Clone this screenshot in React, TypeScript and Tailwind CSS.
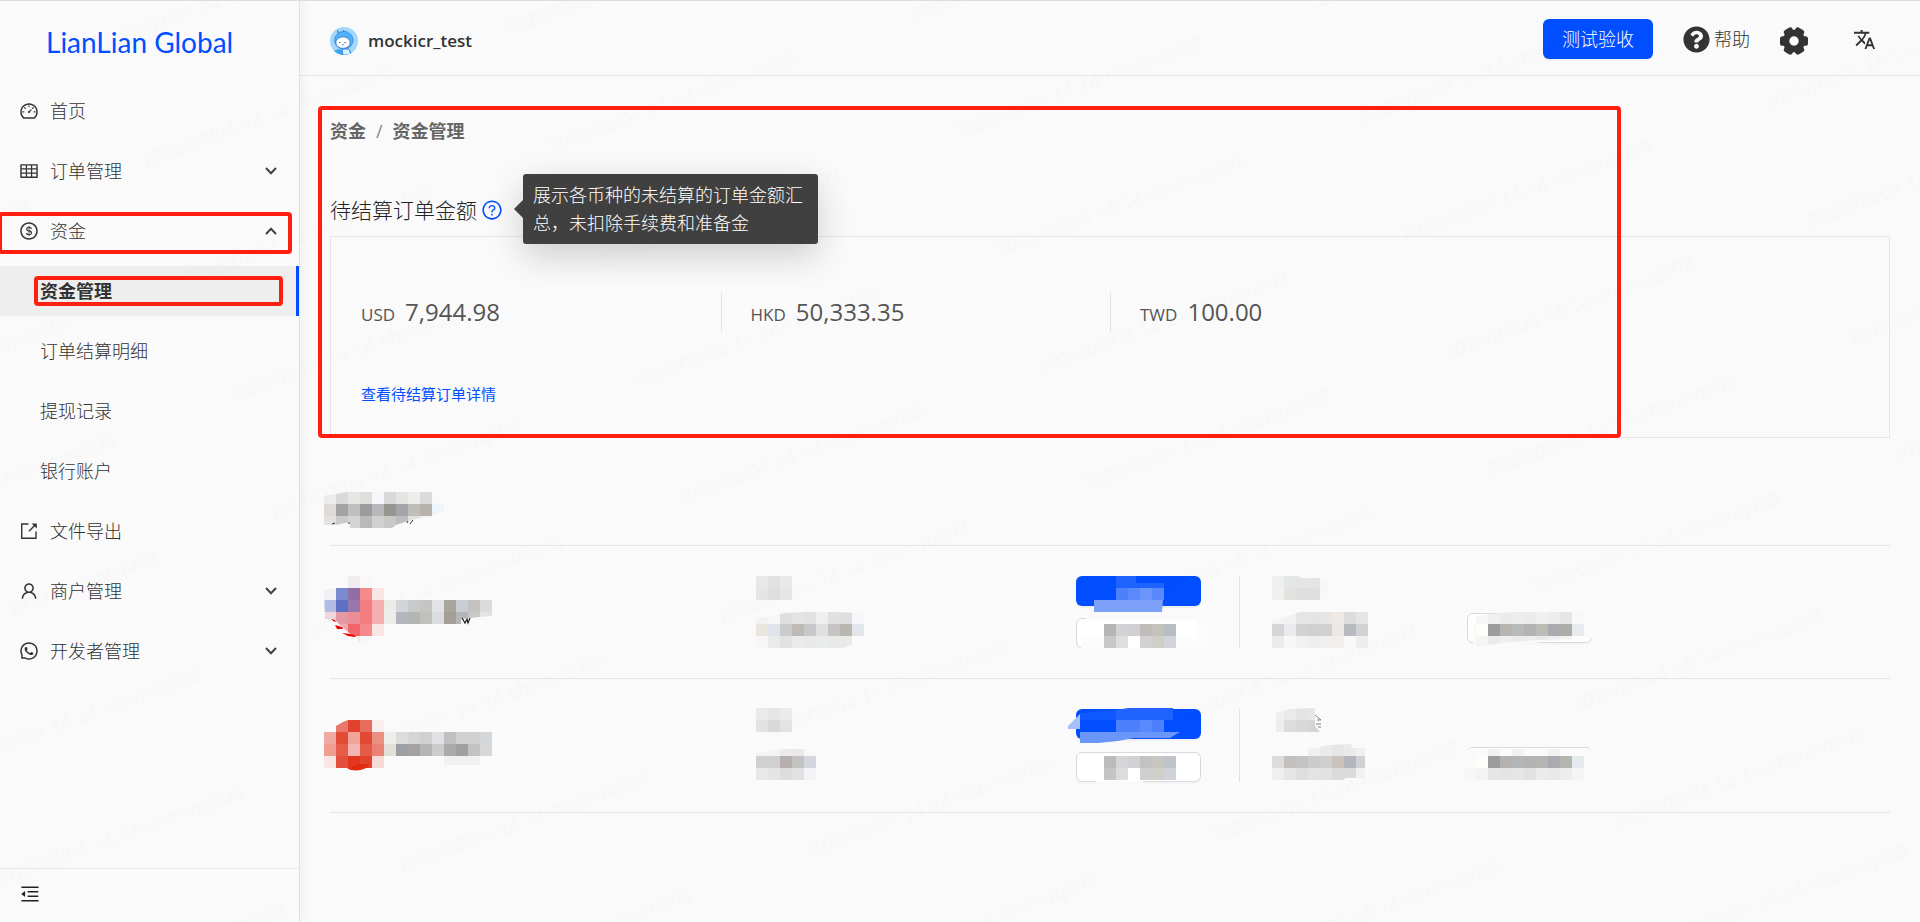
import type { ReactNode } from "react";
import {
  AiOutlineDashboard,
  AiOutlineDollarCircle,
  AiOutlineMenuFold,
  AiOutlineQuestionCircle,
  AiOutlineTable,
  AiOutlineUser,
  AiOutlineWhatsApp,
} from "react-icons/ai";
import { FaQuestionCircle } from "react-icons/fa";
import { MdTranslate } from "react-icons/md";

const CELL = 12;

/* ---------- Redaction mosaics ---------- */

type Piece = { x: number; y: number; rows: string[]; clip?: string };

function Pixels({ x, y, rows, clip }: Piece) {
  const id = `clip-${x}-${y}`;
  return (
    <g clipPath={clip ? `url(#${id})` : undefined} shapeRendering="crispEdges">
      {clip && (
        <clipPath id={id}>
          <polygon points={clip} />
        </clipPath>
      )}
      {rows.map((row, r) =>
        row.split(" ").map((color, c) =>
          color === "." ? null : (
            <rect key={`${r}-${c}`} x={x + c * CELL} y={y + r * CELL} width={CELL} height={CELL} fill={`#${color}`} />
          ),
        ),
      )}
    </g>
  );
}

function Mosaic({
  x,
  y,
  w,
  h,
  className = "block",
  pieces = [],
  children,
}: {
  x: number;
  y: number;
  w: number;
  h: number;
  className?: string;
  pieces?: Piece[];
  children?: ReactNode;
}) {
  return (
    <svg
      aria-hidden="true"
      width={w}
      height={h}
      viewBox={`${x} ${y} ${w} ${h}`}
      className={`pointer-events-none overflow-visible ${className}`}
    >
      {pieces.map((p) => (
        <Pixels key={`${p.x}-${p.y}`} {...p} />
      ))}
      {children}
    </svg>
  );
}

/* ---------- Icons ---------- */

function Chevron({ up = false }: { up?: boolean }) {
  return (
    <svg width="12" height="8" viewBox="0 0 12 8" fill="none" stroke="#444" strokeWidth="2" aria-hidden="true">
      <path d={up ? "M1 7 6 1.8 11 7" : "M1 1 6 6.2 11 1"} />
    </svg>
  );
}

function ExportIcon() {
  return (
    <svg width="20" height="20" viewBox="-1 -1 20 20" fill="none" stroke="currentColor" strokeWidth="1.4" aria-hidden="true">
      <path d="M8.5 2H1.7v14.3H16V9.5" />
      <path d="M9 9.2 15.2 3" />
      <path d="M11.6 1.4h5.2v5.2z" fill="currentColor" stroke="none" />
    </svg>
  );
}

function GearIcon() {
  return (
    <svg width="28" height="28" viewBox="-14 -14 28 28" fill="currentColor" aria-hidden="true">
      <circle r="11.3" />
      {[0, 60, 120].map((angle) => (
        <rect key={angle} x="-14" y="-4.8" width="28" height="9.6" rx="2.6" transform={`rotate(${angle})`} />
      ))}
      <circle r="4.7" fill="#fafafa" />
    </svg>
  );
}

function Avatar() {
  return (
    <svg width="28" height="28" viewBox="0 0 28 28" aria-hidden="true">
      <clipPath id="avatar-round">
        <circle cx="14" cy="14" r="14" />
      </clipPath>
      <g clipPath="url(#avatar-round)">
        <rect width="28" height="28" fill="#a3d6fb" />
        <path d="M4 24c3-2 6-2 8-1l7 0c2 1 3 3 3 5H7z" fill="#3ba4f5" />
        <path d="M12 22h7l2 6h-8z" fill="#d9efff" stroke="#2f7fd6" strokeWidth=".8" />
        <path d="M8.5 6 7.4 3.4M13.5 5.5l.2-2.2" stroke="#2f6fc4" strokeWidth="1.1" />
        <ellipse cx="13.8" cy="13.2" rx="9.2" ry="8.8" fill="#4fb3fb" stroke="#2f86e0" strokeWidth=".8" />
        <ellipse cx="13" cy="15.6" rx="7.2" ry="5.8" fill="#fff" stroke="#2f6fc4" strokeWidth=".8" />
        <path d="M9 15.5h1.4M14.4 15.5h1.4M12 17.4l.8.5.8-.5" stroke="#3b5fa8" strokeWidth="1" fill="none" />
      </g>
    </svg>
  );
}

/* ---------- Sidebar ---------- */

function NavItem({ icon, label, arrow, boxed }: { icon: ReactNode; label: string; arrow?: "up" | "down"; boxed?: boolean }) {
  return (
    <li className="relative my-[10px]">
      <a href="#" className="flex h-[50px] items-center pr-[22px] pl-[19px] text-[#333]">
        <span className="flex w-[31px] shrink-0 text-xl">{icon}</span>
        <span className="grow">{label}</span>
        {arrow && <Chevron up={arrow === "up"} />}
      </a>
      {boxed && (
        <span className="absolute top-[6px] right-[7px] bottom-[2px] -left-[2px] rounded-[4px] border-4 border-[#ff1f10]" />
      )}
    </li>
  );
}

function SubItem({ label, active }: { label: string; active?: boolean }) {
  return (
    <li className={`relative my-[10px] ${active ? "border-r-[3px] border-[#004eff] bg-[#eee] font-bold" : ""}`}>
      <a href="#" className="flex h-[50px] items-center pl-10 text-[#333]">
        {label}
      </a>
      {active && (
        <span className="absolute top-[10px] right-[13px] bottom-[10px] left-[34px] rounded-[4px] border-4 border-[#ff1f10]" />
      )}
    </li>
  );
}

function Sidebar() {
  return (
    <aside className="z-10 flex w-[300px] shrink-0 flex-col border-r border-[#e2e2e2] font-light shadow-[2px_0_10px_rgba(0,0,0,0.05)]">
      <div className="flex h-[75px] items-center pt-[6px] pl-[46px] font-[Lato] text-[28px] leading-none font-normal whitespace-nowrap text-[#004eff]">
        LianLian Global
      </div>
      <nav className="grow">
        <ul className="flow-root">
          <NavItem icon={<AiOutlineDashboard />} label="首页" />
          <NavItem icon={<AiOutlineTable />} label="订单管理" arrow="down" />
          <NavItem icon={<AiOutlineDollarCircle />} label="资金" arrow="up" boxed />
          <SubItem label="资金管理" active />
          <SubItem label="订单结算明细" />
          <SubItem label="提现记录" />
          <SubItem label="银行账户" />
          <NavItem icon={<ExportIcon />} label="文件导出" />
          <NavItem icon={<AiOutlineUser />} label="商户管理" arrow="down" />
          <NavItem icon={<AiOutlineWhatsApp />} label="开发者管理" arrow="down" />
        </ul>
      </nav>
      <div className="flex h-[54px] items-center border-t border-[#e8e8e8] px-[19px] pb-1">
        <button type="button" aria-label="收起菜单" className="text-[22px] text-[#222]">
          <AiOutlineMenuFold />
        </button>
      </div>
    </aside>
  );
}

/* ---------- Header ---------- */

function Header() {
  return (
    <header className="flex h-[75px] items-center border-b border-[#e6e6e6] pt-[6px] pr-[44px] pl-[30px] text-[#333]">
      <Avatar />
      <span className="ml-[10px] grow text-[17px] font-semibold">mockicr_test</span>
      <button
        type="button"
        className="mb-1 h-10 rounded-md bg-[#004eff] px-[19px] font-light text-white shadow-[0_2px_0_rgba(0,0,0,0.04)]"
      >
        测试验收
      </button>
      <a href="#" className="mb-1 ml-[30px] flex items-center gap-1 font-light">
        <FaQuestionCircle className="text-[27px]" />
        帮助
      </a>
      <button type="button" aria-label="设置" className="ml-[30px]">
        <GearIcon />
      </button>
      <button type="button" aria-label="语言" className="mb-1 ml-[45px] text-[23px]">
        <MdTranslate />
      </button>
    </header>
  );
}

/* ---------- Pending settlement ---------- */

const balances = [
  { currency: "USD", amount: "7,944.98" },
  { currency: "HKD", amount: "50,333.35" },
  { currency: "TWD", amount: "100.00" },
];

function PendingCard() {
  return (
    <section>
      <div className="relative flex h-[50px] items-center gap-1 pb-[2px]">
        <h1 className="text-[21px] font-light text-[#222]">待结算订单金额</h1>
        <div className="relative flex items-center">
          <AiOutlineQuestionCircle className="text-[22px] text-[#004eff]" />
          <div
            role="tooltip"
            className="absolute -top-[25px] left-full z-20 ml-5 w-[295px] rounded-[3px] bg-[#404040] px-[10px] py-[7px] leading-7 font-light text-white shadow-[0_12px_36px_rgba(0,0,0,0.18)]"
          >
            <svg className="absolute top-[26px] -left-[9px]" width="9" height="18" viewBox="0 0 9 18" aria-hidden="true">
              <path d="M9 0v18L0 9z" fill="#404040" />
            </svg>
            展示各币种的未结算的订单金额汇总，未扣除手续费和准备金
          </div>
        </div>
      </div>
      <div className="border border-[#e6e6e6] pt-[55px] pb-[30px]">
        <dl className="grid grid-cols-4">
          {balances.map((b, i) => (
            <div
              key={b.currency}
              className={`flex h-10 items-center gap-[10px] text-[#555] ${i > 0 ? "border-l border-[#e2e2e2] pl-[29px]" : "pl-[30px]"}`}
            >
              <dt className="pt-[5px] text-[17px]">{b.currency}</dt>
              <dd className="text-2xl font-medium">{b.amount}</dd>
            </div>
          ))}
        </dl>
        <a href="#" className="mt-[49px] ml-[30px] inline-block text-[15px] leading-[26px] text-[#004eff]">
          查看待结算订单详情
        </a>
      </div>
    </section>
  );
}

/* ---------- Accounts ---------- */

const rowClass = "grid grid-cols-[426fr_320fr_163fr_228fr_423fr] border-b border-[#e6e6e6] pt-[30px]";
const primaryClass = "h-[30px] w-[125px] rounded-md bg-[#004eff] shadow-[0_2px_0_rgba(0,0,0,0.04)]";
const plainClass = "h-[30px] w-[125px] rounded-md border border-[#d9d9d9] bg-white shadow-[0_2px_0_rgba(0,0,0,0.02)]";

function FirstAccount() {
  return (
    <li className={`${rowClass} h-[133px]`}>
      <Mosaic
        x={330}
        y={576}
        w={162}
        h={72}
        pieces={[
          {
            x: 324,
            y: 576,
            rows: [
              ". . f0ecf0 f9f8f9",
              "eff1f7 7b8bd0 926ea5 f58a8b fae5e5",
              "b3bce2 5d70c3 9878ac f47f80 f7b0b1",
              "f0d5da e39aa6 ec8e96 f47f80 f7b0b1",
              ". f2a9b0 f26569 f58a8c fae5e5",
              ". . f7e8e8 f9f8f8 .",
            ],
            clip: "324,590 336,588 348,588 348,576 372,576 372,588 384,588 384,636 372,636 372,643 359,643 357,638 348,632 340,625 334,619 325,619",
          },
          {
            x: 384,
            y: 600,
            rows: [
              "eeece8 d4d5d9 c8c9ca c7c5c3 e2e3e5 a8a59c c8ced3 c5c3c2 dadbda",
              "eeece8 b3b6bd b5b5b5 c1c0bc dcdddf a49e96 b3b6b9 c8c8c8 e4e4e4",
            ],
            clip: "384,600 492,600 492,616 480,617 470,618 461,619 461,624 384,624",
          },
        ]}
      >
        <path d="M331 619l4 1 1 2-3-1zM335 625l7 2 1 2-6 0zM342 633l9 1 5 2-1 1-7-1z" fill="#ee0000" />
        <path d="M462 618l3 5 2-4 1 4 2-5" fill="none" stroke="#111" strokeWidth="1.1" />
      </Mosaic>
      <Mosaic
        x={756}
        y={576}
        w={108}
        h={72}
        pieces={[
          { x: 756, y: 576, rows: ["e8e8e8 e2e2e2 e9e9e9", "e5e5e5 dfdfdf e7e7e7"] },
          {
            x: 756,
            y: 612,
            rows: [
              "f3f3f3 f4f6f8 dedede e6e4e2 e1e2e3 efeff1 e0e0e1 dfdedc f4f6f9",
              "ebe5e0 dee4e9 cbcbcb bfbab6 c8c8ca dfe0e2 c4c4c4 bab6b2 e1e6ea",
              "f7f6f4 e9ebea e2e2e2 ebebeb e9e9e7 eaebeb e8eae9 ebeae8",
            ],
            clip: "756,618 766,617 785,613 805,612 832,612 864,613 864,636 852,644 844,648 756,648",
          },
        ]}
      />
      <div className="relative flex flex-col items-start gap-3">
        <button type="button" aria-label="提现" className={primaryClass} />
        <button type="button" aria-label="明细" className={plainClass} />
        <Mosaic x={1076} y={576} w={125} h={72} className="absolute top-0 left-0">
          <path d="M1086 617h116v31.500h-6V620h-110z" fill="#fafafa" />
          <path d="M1196 624h12v24h-12z" fill="#fcfcfc" />
          <path d="M1081 638h115v12h-115z" fill="#fcfcfc" />
          <path d="M1116 576h20v7h28v5h-48z" fill="#1f63ff" />
          <Pixels x={1116} y={588} rows={["4c80fd 5a8afd 6b96fc 5a88fd"]} />
          <path d="M1094 600h69l-1 12h-68z" fill="#7da0f9" />
          <Pixels
            x={1104}
            y={624}
            rows={["b5b5b5 d3d3d3 cfd0d3 bfbcb9 c5c2bb b9bdc5", "c8c8c8 dedede ffffff d3d2d0 cfcec9 d3d4d9"]}
          />
        </Mosaic>
      </div>
      <div className="h-[72px] border-l border-[#e2e2e2] pl-8">
        <Mosaic
          x={1272}
          y={576}
          w={96}
          h={72}
          pieces={[
            {
              x: 1272,
              y: 576,
              rows: ["f0efee e4e7e7 e4e5e4 e4e4e4 f7f7f7", "f1f0ef e2e2e0 dddedf dfdfdf f8f8f8"],
              clip: "1272,576 1298,576 1302,578 1329,578 1326,600 1272,600",
            },
            {
              x: 1272,
              y: 612,
              rows: [
                "f4f4f4 f2f1f0 e5e5e5 e4e4e5 e6e6e6 efe9e6 dcdcdc e5e5e5",
                "d6d5d3 e9ebee d3d2d1 d0d0d0 d1d0d0 ece7e4 b9babf d1d2d2",
                "ebebea f5f7f9 f1f1f1 eeeeee efefef f3edeb f9f9f9 ededec",
              ],
              clip: "1272,621 1285,617 1300,612 1368,612 1368,648 1272,648",
            },
          ]}
        />
      </div>
      <div className="relative pt-[37px]">
        <button type="button" aria-label="查看" className={plainClass} />
        <Mosaic x={1467} y={576} w={125} h={72} className="absolute top-0 left-0">
          <path d="M1504 612h90v26h-3l-80 7-32 1-6-1v-19l8-9 23-2z" fill="#fafafa" />
          <Pixels
            x={1476}
            y={612}
            rows={[
              "f6f6f6 f0f0f0 ebebea ededed ebebeb f0f0f0 ededed e4e6e8 f8f8f8",
              "fffdfa 9c9c9c b8b5b1 b7b9bb b3b3b3 bdbbb6 a9abb0 aeaca8 e7ebef",
              "f6f5f4 ebebeb eeeeee ebebeb eeeeee e9e9e9 eeeeee f3f3f3 ffffff",
            ]}
            clip="1471,618 1490,614 1513,612 1584,612 1584,637 1572,639 1540,640 1510,642 1488,645 1476,646"
          />
        </Mosaic>
      </div>
    </li>
  );
}

function SecondAccount() {
  return (
    <li className={`${rowClass} h-[134px]`}>
      <Mosaic
        x={330}
        y={709}
        w={162}
        h={72}
        pieces={[
          {
            x: 324,
            y: 720,
            rows: [
              ". e9786a e0422d e76c5c faeeec",
              "f0aaa2 e24a34 f0a49a e24a34 ed8f83",
              "ef9c92 e65b4a f4b6b0 e65b48 ec8173",
              "f9e5e3 e24f3d e23620 e2432d f6d8d5",
            ],
            clip: "324,732 336,726 343,722 348,720 384,720 384,768 324,768",
          },
          {
            x: 384,
            y: 732,
            rows: [
              "eeeeea dbdddf d5d5d3 cfd1d0 e0e2e4 c0c0c2 d1d1d1 d2d1d0 d3d7da",
              "e3dfd9 9ca0a4 a4a3a1 b4b5b6 cbccce aaaaaa a0a0a0 c3c3c3 d6d7d9",
            ],
          },
        ]}
      >
        <path d="M347 768q6-1 10-4l13 0q-4 6-14 6.500-6 0-9-2.500z" fill="#e02b13" />
        <path d="M444 756h36v9h-36z" fill="#f1f1f1" />
      </Mosaic>
      <Mosaic
        x={756}
        y={709}
        w={108}
        h={72}
        pieces={[
          { x: 756, y: 708, rows: ["e9eae9 e6e6e6 eaecec", "e3e3e1 dadada e3e5e4"] },
          {
            x: 756,
            y: 744,
            rows: [
              "f3f3f3 f3f3f3 ebebeb e9e9ea f7f7f7",
              "d0d0d0 d0d0d0 b6afad c3c3c4 d4d6de",
              "e8e8e6 e3e4e5 dddddd e1e1df f3f4f8",
            ],
            clip: "756,753 767,752 786,749 804,749 816,754 816,780 756,780",
          },
        ]}
      />
      <div className="relative flex flex-col items-start gap-[13px]">
        <button type="button" aria-label="提现" className={primaryClass} />
        <button type="button" aria-label="明细" className={plainClass} />
        <Mosaic x={1076} y={709} w={125} h={72} className="absolute top-0 left-0">
          <path d="M1080 713l36-3v10h-36z" fill="#1058ff" />
          <path d="M1116 710l12-2h45v12h-57z" fill="#2063ff" />
          <Pixels x={1116} y={720} rows={["4c80fd 4c80fd 5a8afd 4c80fd"]} />
          <path d="M1080 732h100l-10 6h-36l-16 3-20 2h-18z" fill="#6a95f9" />
          <path d="M1068 726l12-12v15h-12z" fill="#a8c0fa" />
          <path d="M1096 781h47v3h-47z" fill="#fafafa" />
          <Pixels
            x={1104}
            y={756}
            rows={["bcbbba d6d6d6 d0d2d5 c3c2c0 c9c5c1 bfc3ca", "c5c5c5 dcdcdc ffffff d0cfcd cfcec9 cfd2d9"]}
          />
        </Mosaic>
      </div>
      <div className="h-[73px] border-l border-[#e2e2e2] pl-8">
        <Mosaic
          x={1272}
          y={709}
          w={96}
          h={72}
          pieces={[
            {
              x: 1272,
              y: 708,
              rows: ["f0f0f0 e9ebea e3e4e5 e6e6e6", "ededed dcdcdc d7d8d8 d6d5d3"],
              clip: "1276,713 1290,709 1315,708 1315,726 1320,732 1276,732",
            },
            {
              x: 1272,
              y: 744,
              rows: [
                ". . . f0f0f0 ebebeb e5e6e6 eaeaea f0f0f0",
                "dddcda c1c0bc c3c4c3 c9cbcd cfcfd0 c9c2bd b3b6bd d0d1d3",
                "efeff0 e6e6e6 dfdedc e3e3e3 e1e1e1 dadada dbdbdc f0f1f2",
              ],
              clip: "1272,756 1308,756 1308,749 1330,745 1351,744 1352,748 1365,748 1365,778 1345,778 1344,780 1272,780",
            },
          ]}
        >
          <path d="M1315 715l6 5h-4M1316 724h5M1318 727h3" fill="none" stroke="#7d8288" />
        </Mosaic>
      </div>
      <div className="relative pt-[38px]">
        <button type="button" aria-label="查看" className={plainClass} />
        <Mosaic x={1467} y={709} w={125} h={72} className="absolute top-0 left-0">
          <path d="M1465 750h14l8-1h97l10 1v31h-129z" fill="#fafafa" />
          <Pixels
            x={1464}
            y={756}
            rows={[
              ". fffdfa 9c9c9c b4b1ae b3b5b7 b3b3b3 b6b5b1 a9abb0 b6b6b1 e5eaef",
              "f8f7f7 f5f3f2 e6e6e6 e4e4e4 e6e6e6 e1e1e1 ebebeb e9e9e9 ededeb f3f5f7",
            ]}
          />
          <path d="M1512 749h12v7h-12zM1548 749h12v7h-12zM1488 749h12v7h-12z" fill="#f1f1f1" />
        </Mosaic>
      </div>
    </li>
  );
}

function Accounts() {
  return (
    <section className="mt-[54px]">
      <h2 className="h-[54px] border-b border-[#e6e6e6]">
        <Mosaic
          x={330}
          y={492}
          w={108}
          h={36}
          pieces={[
            {
              x: 324,
              y: 492,
              rows: [
                "eeecea d9dad9 e6e6e5 dfdedb f4f6f9 d9dad8 e3e4e3 eeedea dadbda f9f9fa",
                "dfdbd8 a1a3a5 bfbfbf 9c9c9c b7b8bb 979590 a5a4a9 bfbebc b7b2ac edf4fa",
                "e5e1df c9cacc d4d4d4 b9b9b9 d1d1d2 c8c8c7 bdbcc0 e0e0e0 eeeeee",
              ],
              clip: "324,496 336,494 346,492 444,492 444,511 432,516 420,518 408,521 396,525 392,528 350,528 350,522 336,525 324,525",
            },
          ]}
        >
          <path d="M332 524l3-1M348 523h2M408 521l-1 2M413 520l-3 4" stroke="#333" />
        </Mosaic>
      </h2>
      <ul>
        <FirstAccount />
        <SecondAccount />
      </ul>
    </section>
  );
}

/* ---------- Watermark ---------- */

function Watermark() {
  return (
    <svg aria-hidden="true" className="pointer-events-none absolute inset-0 z-30 h-full w-full">
      <defs>
        <pattern
          id="watermark"
          width="386"
          height="125"
          patternUnits="userSpaceOnUse"
          patternTransform="translate(917 46) rotate(-20)"
        >
          <text x="5" y="100" fontSize="20" fontFamily="Liberation Sans, sans-serif" fill="#000" fillOpacity="0.012">
            2025/03/04 14:14-chenwq003
          </text>
        </pattern>
      </defs>
      <rect width="100%" height="100%" fill="url(#watermark)" />
    </svg>
  );
}

export default function App() {
  return (
    <div className="relative flex min-h-screen overflow-hidden border-t border-[#dedede] bg-[#fafafa] font-['Open_Sans','Noto_Sans_CJK_SC',sans-serif] text-lg leading-7 text-[#333]">
      <Sidebar />
      <div className="min-w-0 grow">
        <Header />
        <main className="relative px-[30px] pt-10">
          <nav aria-label="面包屑" className="flex h-[30px] items-center gap-[10px] font-bold text-[#666]">
            <a href="#">资金</a>
            <span className="font-normal text-[#888]">/</span>
            <span>资金管理</span>
          </nav>
          <div className="mt-10">
            <PendingCard />
          </div>
          <Accounts />
          <div className="pointer-events-none absolute top-[30px] right-[299px] left-[18px] h-[332px] rounded-[4px] border-4 border-[#ff1f10]" />
        </main>
      </div>
      <Watermark />
    </div>
  );
}
